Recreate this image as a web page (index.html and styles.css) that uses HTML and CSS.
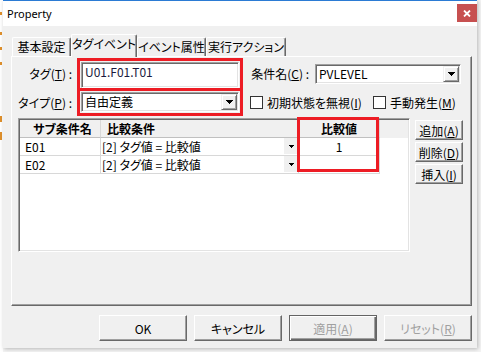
FILE: index.html
```html
<!DOCTYPE html>
<html lang="ja">
<head>
    <meta charset="UTF-8">
    <meta name="viewport" content="width=device-width, initial-scale=1.0">
    <title>Property</title>
    <link rel="stylesheet" href="styles.css">
</head>
<body>
    <div class="behind"></div>
    <div class="window">
        <div class="titlebar">
            <span class="title">Property</span>
            <button class="close" type="button">
                <svg width="8" height="7" viewBox="0 0 8 7"><path d="M1 0.5L7 6.5M7 0.5L1 6.5" stroke="#fff" stroke-width="1.8"/></svg>
            </button>
        </div>

        <div class="client">
            <div class="tabs">
                <div class="tab t1">基本設定</div>
                <div class="tab t2 active">タグイベント</div>
                <div class="tab t3">イベント属性</div>
                <div class="tab t4">実行アクション</div>
            </div>

            <div class="panel">
                <div class="top">
                    <div class="labels">
                        <label class="lbl row-a">タグ(<u>T</u>) :</label>
                        <label class="lbl row-b">タイプ(<u>P</u>) :</label>
                    </div>

                    <div class="mark fields">
                        <div class="cell first">
                            <div class="edit">U01.F01.T01</div>
                        </div>
                        <div class="cell">
                            <div class="combo">
                                <span class="val">自由定義</span>
                                <span class="drop"><svg width="7" height="4" viewBox="0 0 7 4"><path d="M0 0H7V1H6V2H5V3H4V4H3V3H2V2H1V1H0Z"/></svg></span>
                            </div>
                        </div>
                    </div>

                    <div class="right">
                        <div class="cond row-a">
                            <label class="lbl">条件名(<u>C</u>) :</label>
                            <div class="combo wide">
                                <span class="val">PVLEVEL</span>
                                <span class="drop"><svg width="7" height="4" viewBox="0 0 7 4"><path d="M0 0H7V1H6V2H5V3H4V4H3V3H2V2H1V1H0Z"/></svg></span>
                            </div>
                        </div>
                        <div class="checks row-b">
                            <label class="check first"><span class="box"></span>初期状態を無視(<u>I</u>)</label>
                            <label class="check"><span class="box"></span>手動発生(<u>M</u>)</label>
                        </div>
                    </div>
                </div>

                <div class="list-row">
                    <div class="grid">
                        <div class="row head">
                            <div class="c c1">サブ条件名</div>
                            <div class="c c2">比較条件</div>
                            <div class="c c3">比較値</div>
                            <div class="c fill"></div>
                        </div>
                        <div class="row">
                            <div class="c c1">E01</div>
                            <div class="c c2"><span>[2] タグ値 = 比較値</span><span class="mini"><svg width="5" height="3" viewBox="0 0 5 3"><path d="M0 0H5V1H4V2H3V3H2V2H1V1H0Z"/></svg></span></div>
                            <div class="c c3">1</div>
                            <div class="c fill"></div>
                        </div>
                        <div class="row">
                            <div class="c c1">E02</div>
                            <div class="c c2"><span>[2] タグ値 = 比較値</span><span class="mini"><svg width="5" height="3" viewBox="0 0 5 3"><path d="M0 0H5V1H4V2H3V3H2V2H1V1H0Z"/></svg></span></div>
                            <div class="c c3"></div>
                            <div class="c fill"></div>
                        </div>
                        <!-- red marker over the value column -->
                        <div class="mark col-mark"></div>
                    </div>

                    <div class="side">
                        <button class="btn small" type="button">追加(<u>A</u>)</button>
                        <button class="btn small" type="button">削除(<u>D</u>)</button>
                        <button class="btn small" type="button">挿入(<u>I</u>)</button>
                    </div>
                </div>
            </div>

            <div class="footer">
                <button class="btn" type="button">OK</button>
                <button class="btn" type="button">キャンセル</button>
                <button class="btn default" type="button" disabled>適用(<u>A</u>)</button>
                <button class="btn" type="button" disabled>リセット(<u>R</u>)</button>
            </div>
        </div>
    </div>
</body>
</html>
```

FILE: styles.css
```css
* {
    box-sizing: border-box;
}

html, body {
    margin: 0;
    padding: 0;
}

body {
    width: 481px;
    height: 352px;
    overflow: hidden;
    display: flex;
    background-color: #f4f4f4;
    font-family: "Noto Sans CJK JP", sans-serif;
    font-size: 12px;
    font-feature-settings: "palt";
    color: #000;
}

u {
    text-decoration-thickness: 1px;
    text-underline-offset: 1px;
}

/* bits of the window behind */
.behind {
    width: 3px;
    height: 100%;
    background-color: #fff;
    background-image:
        linear-gradient(#e0902c, #e0902c),
        linear-gradient(#e0902c, #e0902c),
        linear-gradient(#e0902c, #e0902c),
        linear-gradient(#e0902c, #e0902c),
        linear-gradient(#e0902c, #e0902c),
        linear-gradient(#e0902c, #e0902c);
    background-size: 2px 3px, 2px 3px, 2px 3px, 2px 3px, 2px 6px, 2px 8px;
    background-position: 0 12px, 0 32px, 0 47px, 0 62px, 0 116px, 0 132px;
    background-repeat: no-repeat;
}

.window {
    width: 474px;
    height: 348px;
    display: flex;
    flex-direction: column;
    background-color: #f0f0f0;
    border-top: 1px solid #2b7bd4;
    box-shadow: 1px 1px 4px rgba(0, 0, 0, 0.25);
}

.titlebar {
    height: 25px;
    display: flex;
    justify-content: space-between;
    align-items: flex-start;
    background-color: #fff;
}

.title {
    font-family: "Noto Sans", sans-serif;
    font-size: 11px;
    line-height: 25px;
    padding-left: 4px;
}

.close {
    width: 20px;
    height: 18px;
    margin-top: 3px;
    padding: 0;
    border: none;
    background-color: #c75050;
    display: flex;
    align-items: center;
    justify-content: center;
}

.client {
    flex: 1;
    display: flex;
    flex-direction: column;
    padding: 8px 5px 0 8px;
}

/* tabs */
.tabs {
    height: 22px;
    display: flex;
    align-items: flex-end;
    padding-left: 1px;
    position: relative;
    z-index: 1;
}

.tab {
    height: 19px;
    line-height: 17px;
    text-align: center;
    white-space: nowrap;
    background-color: #f0f0f0;
    border-top: 1px solid #fff;
    border-left: 1px solid #fff;
    border-right: 1px solid #696969;
    box-shadow: inset -1px 0 #a0a0a0;
    border-radius: 2px 2px 0 0;
}

.tab.active {
    height: 23px;
    margin-bottom: -1px;
    line-height: 18px;
}

.t1 { width: 59px; }
.t2 { width: 66px; }
.t3 { width: 69px; }
.t4 { width: 80px; }

.panel {
    height: 250px;
    border: 1px solid;
    border-color: #fff #696969 #696969 #fff;
    box-shadow: inset -1px -1px #a0a0a0;
    padding: 1px 0 0 6px;
}

/* top form */
.top {
    height: 58px;
    display: flex;
}

.labels {
    width: 59px;
    display: flex;
    flex-direction: column;
}

.lbl {
    display: flex;
    align-items: center;
    justify-content: flex-end;
    white-space: nowrap;
    padding-right: 5px;
}

.row-a {
    height: 31px;
}

.row-b {
    height: 27px;
}

.mark {
    border: 3px solid #ed1c24;
}

.fields {
    width: 166px;
    height: 58px;
}

.cell {
    padding: 1px;
}

.cell.first {
    height: 30px;
    padding-bottom: 0;
    border-bottom: 3px solid #ed1c24;
}

.edit, .combo {
    background-color: #fff;
    border: 1px solid;
    border-color: #a0a0a0 #fff #fff #a0a0a0;
    box-shadow: inset 1px 1px #696969, inset -1px -1px #e3e3e3;
}

.edit {
    height: 26px;
    padding: 1px 3px;
    line-height: 16px;
    color: #1a1a40;
}

.combo {
    height: 20px;
    display: flex;
}

.combo .val {
    flex: 1;
    padding-left: 3px;
    line-height: 18px;
    white-space: nowrap;
}

.combo .drop {
    width: 16px;
    height: 16px;
    margin: 1px;
    display: flex;
    align-items: center;
    justify-content: center;
    background-color: #f0f0f0;
    border: 1px solid;
    border-color: #f0f0f0 #696969 #696969 #f0f0f0;
    box-shadow: inset 1px 1px #fff, inset -1px -1px #a0a0a0;
}

.right {
    flex: 1;
    margin-left: 7px;
}

.cond {
    display: flex;
    align-items: center;
}

.cond .lbl {
    width: 65px;
    padding-right: 6px;
}

.combo.wide {
    width: 146px;
}

.checks {
    display: flex;
    align-items: center;
}

.check {
    display: flex;
    align-items: center;
    white-space: nowrap;
}

.check.first {
    width: 123px;
}

.box {
    width: 13px;
    height: 13px;
    margin-right: 4px;
    border: 1px solid #333;
    background-color: #fff;
}

/* list */
.list-row {
    display: flex;
    margin-top: 2px;
}

.grid {
    position: relative;
    width: 392px;
    height: 134px;
    background-color: #fff;
    border: 1px solid;
    border-color: #a0a0a0 #fff #fff #a0a0a0;
    box-shadow: inset 1px 1px #696969, inset -1px -1px #e3e3e3;
    padding: 1px 1px 0 1px;
}

.row {
    display: grid;
    grid-template-columns: 81px 198px 81px 1fr;
    height: 18px;
}

.c {
    line-height: 17px;
    white-space: nowrap;
    border-right: 1px solid #d8d8d8;
    border-bottom: 1px solid #d8d8d8;
}

.c.fill {
    border: none;
}

.head .c {
    background-color: #f0f0f0;
    font-weight: bold;
    border-bottom-color: #c0c0c0;
}

.head .c1, .c3 {
    text-align: center;
}

.head .c2 {
    padding-left: 6px;
}

.c1 {
    padding-left: 5px;
}

.c2 {
    display: flex;
    justify-content: space-between;
    padding-left: 1px;
}

.mini {
    width: 14px;
    height: 16px;
    margin-top: 0;
    display: flex;
    align-items: center;
    justify-content: center;
    background-color: #f0f0f0;
}

.col-mark {
    position: absolute;
    left: 278px;
    top: -2px;
    width: 82px;
    height: 55px;
}

.side {
    width: 48px;
    margin-left: 5px;
    padding-top: 2px;
    display: flex;
    flex-direction: column;
    gap: 2px;
}

/* buttons */
.btn {
    width: 88px;
    height: 26px;
    padding: 0;
    font: inherit;
    color: #000;
    background-color: #f0f0f0;
    border: 1px solid;
    border-color: #fff #696969 #696969 #fff;
    box-shadow: inset -1px -1px #a0a0a0;
    white-space: nowrap;
}

.btn.small {
    width: 48px;
    height: 20px;
    line-height: 17px;
}

.btn:disabled {
    color: #a0a0a0;
}

.btn.default {
    border-color: #646464;
    box-shadow: inset 1px 1px #fff, inset -1px -1px #696969, inset -2px -2px #a0a0a0;
}

.footer {
    display: flex;
    justify-content: flex-end;
    gap: 7px;
    margin-top: 9px;
}
```
